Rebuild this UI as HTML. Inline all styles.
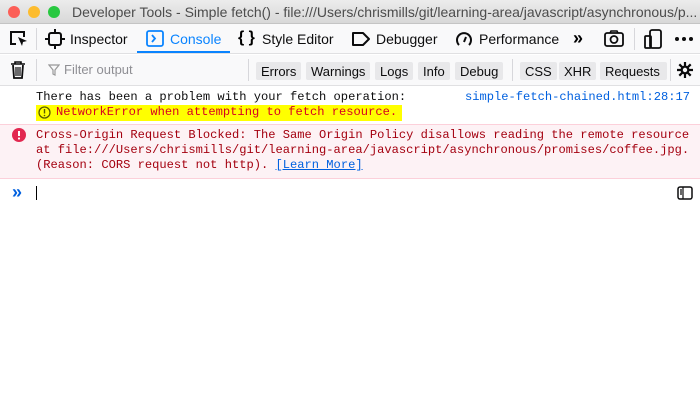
<!DOCTYPE html>
<html><head><style>
*{margin:0;padding:0;box-sizing:border-box}
body{width:700px;height:416px;overflow:hidden;background:#fff;font-family:"Liberation Sans",sans-serif;position:relative}
.abs{position:absolute;white-space:nowrap}
.mono{font-family:"Liberation Mono",monospace;font-size:12.1px}
.title{top:0;left:0;width:700px;height:24px;background:linear-gradient(#ececec,#d8d8d8);border-bottom:1px solid #c4c4c4}
.dot{top:6px;width:12px;height:12px;border-radius:50%}
.tb{top:24px;left:0;width:700px;height:30px;background:#f9f9fa;border-bottom:1px solid #e0e0e2}
.fb{top:55px;left:0;width:700px;height:31px;background:#f9f9fa;border-bottom:1px solid #e0e0e2}
.tab{font-size:14px;color:#0c0c0d;top:31px}
.btn{top:62px;height:18px;background:#e8e8ea;border-radius:2px;font-size:13px;color:#0c0c0d;padding:1px 5px 0;line-height:17px}
</style></head><body>
<div class="abs title"></div>
<div class="abs dot" style="left:8px;background:#fc5f57"></div>
<div class="abs dot" style="left:28px;background:#fdbc2e"></div>
<div class="abs dot" style="left:48px;background:#28c840"></div>
<div class="abs" style="left:72px;top:4px;font-size:14px;color:#4c4c4c">Developer Tools - Simple fetch() - file:///Users/chrismills/git/learning-area/javascript/asynchronous/p...</div>
<div class="abs tb"></div>
<div class="abs" style="left:137px;top:51px;width:93px;height:2px;background:#0a84ff"></div>
<svg class="abs" style="left:8px;top:29px" width="22" height="20" viewBox="0 0 22 20"><path d="M8 15H3V3h13v5" fill="none" stroke="#0c0c0d" stroke-width="2"/><path d="M10 8l9 4-4 1-1 4z" fill="#0c0c0d"/></svg>
<div class="abs" style="left:36px;top:28px;width:1px;height:22px;background:#d7d7db"></div>
<svg class="abs" style="left:45px;top:29px" width="20" height="20" viewBox="0 0 20 20"><rect x="4" y="4" width="12" height="12" rx="2" fill="none" stroke="#0c0c0d" stroke-width="2"/><path d="M10 0v4M10 16v4M0 10h4M16 10h4" stroke="#0c0c0d" stroke-width="2"/></svg>
<div class="abs tab" style="left:70px">Inspector</div>
<svg class="abs" style="left:146px;top:30px" width="18" height="17" viewBox="0 0 18 17"><rect x="1" y="1" width="16" height="15" rx="2" fill="none" stroke="#0a84ff" stroke-width="1.8"/><path d="M6 5l3 3.5-3 3.5" fill="none" stroke="#0a84ff" stroke-width="1.8"/></svg>
<div class="abs tab" style="left:170px;color:#0a84ff">Console</div>
<div class="abs" style="left:238px;top:29px;font-size:16px;font-weight:bold">{ }</div>
<div class="abs tab" style="left:262px">Style Editor</div>
<svg class="abs" style="left:351px;top:31px" width="20" height="16" viewBox="0 0 20 16"><path d="M2 2h10l6 6-6 6H2z" fill="none" stroke="#0c0c0d" stroke-width="2" stroke-linejoin="round"/></svg>
<div class="abs tab" style="left:376px">Debugger</div>
<svg class="abs" style="left:455px;top:30px" width="18" height="18" viewBox="0 0 18 18"><path d="M4 15A7 7 0 1 1 14 15" fill="none" stroke="#0c0c0d" stroke-width="2"/><path d="M9 12l2-5" stroke="#0c0c0d" stroke-width="2"/></svg>
<div class="abs tab" style="left:479px">Performance</div>
<div class="abs" style="left:573px;top:28px;font-size:18px;font-weight:bold">»</div>
<svg class="abs" style="left:604px;top:30px" width="20" height="18" viewBox="0 0 20 18"><rect x="1" y="3" width="18" height="13" rx="2" fill="none" stroke="#0c0c0d" stroke-width="1.8"/><circle cx="10" cy="9.5" r="3.5" fill="none" stroke="#0c0c0d" stroke-width="1.8"/><path d="M6 3l1-2h6l1 2" fill="none" stroke="#0c0c0d" stroke-width="1.5"/></svg>
<div class="abs" style="left:634px;top:28px;width:1px;height:22px;background:#d7d7db"></div>
<svg class="abs" style="left:644px;top:29px" width="18" height="20" viewBox="0 0 18 20"><rect x="6" y="1" width="11" height="18" rx="2" fill="none" stroke="#0c0c0d" stroke-width="1.8"/><rect x="1" y="7" width="6" height="12" rx="1" fill="none" stroke="#0c0c0d" stroke-width="1.8"/></svg>
<svg class="abs" style="left:674px;top:36px" width="20" height="6" viewBox="0 0 20 6"><circle cx="3" cy="3" r="2" fill="#0c0c0d"/><circle cx="10" cy="3" r="2" fill="#0c0c0d"/><circle cx="17" cy="3" r="2" fill="#0c0c0d"/></svg>
<div class="abs fb"></div>
<svg class="abs" style="left:10px;top:61px" width="16" height="18" viewBox="0 0 16 18"><path d="M1 3h14M5 3V1h6v2" fill="none" stroke="#0c0c0d" stroke-width="1.6"/><path d="M3 4l1 13h8l1-13" fill="none" stroke="#0c0c0d" stroke-width="1.8"/><path d="M6 6v9M8 6v9M10 6v9" stroke="#0c0c0d" stroke-width="1.2"/></svg>
<div class="abs" style="left:36px;top:59px;width:1px;height:22px;background:#d7d7db"></div>
<svg class="abs" style="left:48px;top:64px" width="12" height="12" viewBox="0 0 12 12"><path d="M1 1h10L7 6v5L5 10V6z" fill="none" stroke="#999" stroke-width="1.2"/></svg>
<div class="abs" style="left:64px;top:62px;font-size:13px;color:#8f8f94">Filter output</div>
<div class="abs" style="left:248px;top:59px;width:1px;height:22px;background:#d7d7db"></div>
<div class="abs btn" style="left:256px">Errors</div>
<div class="abs btn" style="left:306px">Warnings</div>
<div class="abs btn" style="left:375px">Logs</div>
<div class="abs btn" style="left:418px">Info</div>
<div class="abs btn" style="left:455px">Debug</div>
<div class="abs" style="left:512px;top:59px;width:1px;height:22px;background:#d7d7db"></div>
<div class="abs btn" style="left:520px">CSS</div>
<div class="abs btn" style="left:559px">XHR</div>
<div class="abs btn" style="left:600px;width:67px">Requests</div>
<div class="abs" style="left:670px;top:59px;width:1px;height:22px;background:#d7d7db"></div>
<svg class="abs" style="left:676px;top:61px" width="18" height="18" viewBox="0 0 18 18"><g stroke="#0c0c0d" stroke-width="2.2"><path d="M9 1v16M1 9h16M3.3 3.3l11.4 11.4M14.7 3.3L3.3 14.7"/></g><circle cx="9" cy="9" r="4.5" fill="#0c0c0d"/><circle cx="9" cy="9" r="2.2" fill="#f9f9fa"/></svg>
<div class="abs mono" style="left:36px;top:90px;color:#0c0c0d">There has been a problem with your fetch operation:</div>
<div class="abs mono" style="left:465px;top:90px;color:#0060df">simple-fetch-chained.html:28:17</div>
<div class="abs" style="left:36px;top:105px;width:366px;height:16px;background:#ffff00"></div>
<svg class="abs" style="left:38px;top:106px" width="13" height="13" viewBox="0 0 13 13"><circle cx="6.5" cy="6.5" r="5.5" fill="none" stroke="#5a5a00" stroke-width="1.3"/><path d="M6.5 3v4.5" stroke="#5a5a00" stroke-width="1.4"/><circle cx="6.5" cy="9.5" r=".8" fill="#5a5a00"/></svg>
<div class="abs mono" style="left:56px;top:105px;color:#d70022">NetworkError when attempting to fetch resource.</div>
<div class="abs" style="left:0;top:124px;width:700px;height:55px;background:#fdf2f5;border-top:1px solid #fcd0da;border-bottom:1px solid #fcd0da"></div>
<svg class="abs" style="left:12px;top:128px" width="14" height="14" viewBox="0 0 14 14"><circle cx="7" cy="7" r="7" fill="#e22850"/><path d="M7 3v5" stroke="#fff" stroke-width="2"/><circle cx="7" cy="10.5" r="1.1" fill="#fff"/></svg>
<div class="abs mono" style="left:36px;top:128px;color:#a4000f;line-height:15px">Cross-Origin Request Blocked: The Same Origin Policy disallows reading the remote resource<br>at file:///Users/chrismills/git/learning-area/javascript/asynchronous/promises/coffee.jpg.<br>(Reason: CORS request not http). <span style="color:#0060df;text-decoration:underline">[Learn More]</span></div>
<div class="abs" style="left:12px;top:182px;font-size:18px;color:#0060df;font-weight:bold">»</div>
<div class="abs" style="left:36px;top:186px;width:1px;height:14px;background:#000"></div>
<svg class="abs" style="left:677px;top:186px" width="16" height="14" viewBox="0 0 16 14"><rect x="1" y="1" width="14" height="12" rx="2" fill="none" stroke="#0c0c0d" stroke-width="1.5"/><path d="M6 1v12M3 4h2M3 6h2M3 8h2" stroke="#0c0c0d" stroke-width="1.2"/></svg>
</body></html>
